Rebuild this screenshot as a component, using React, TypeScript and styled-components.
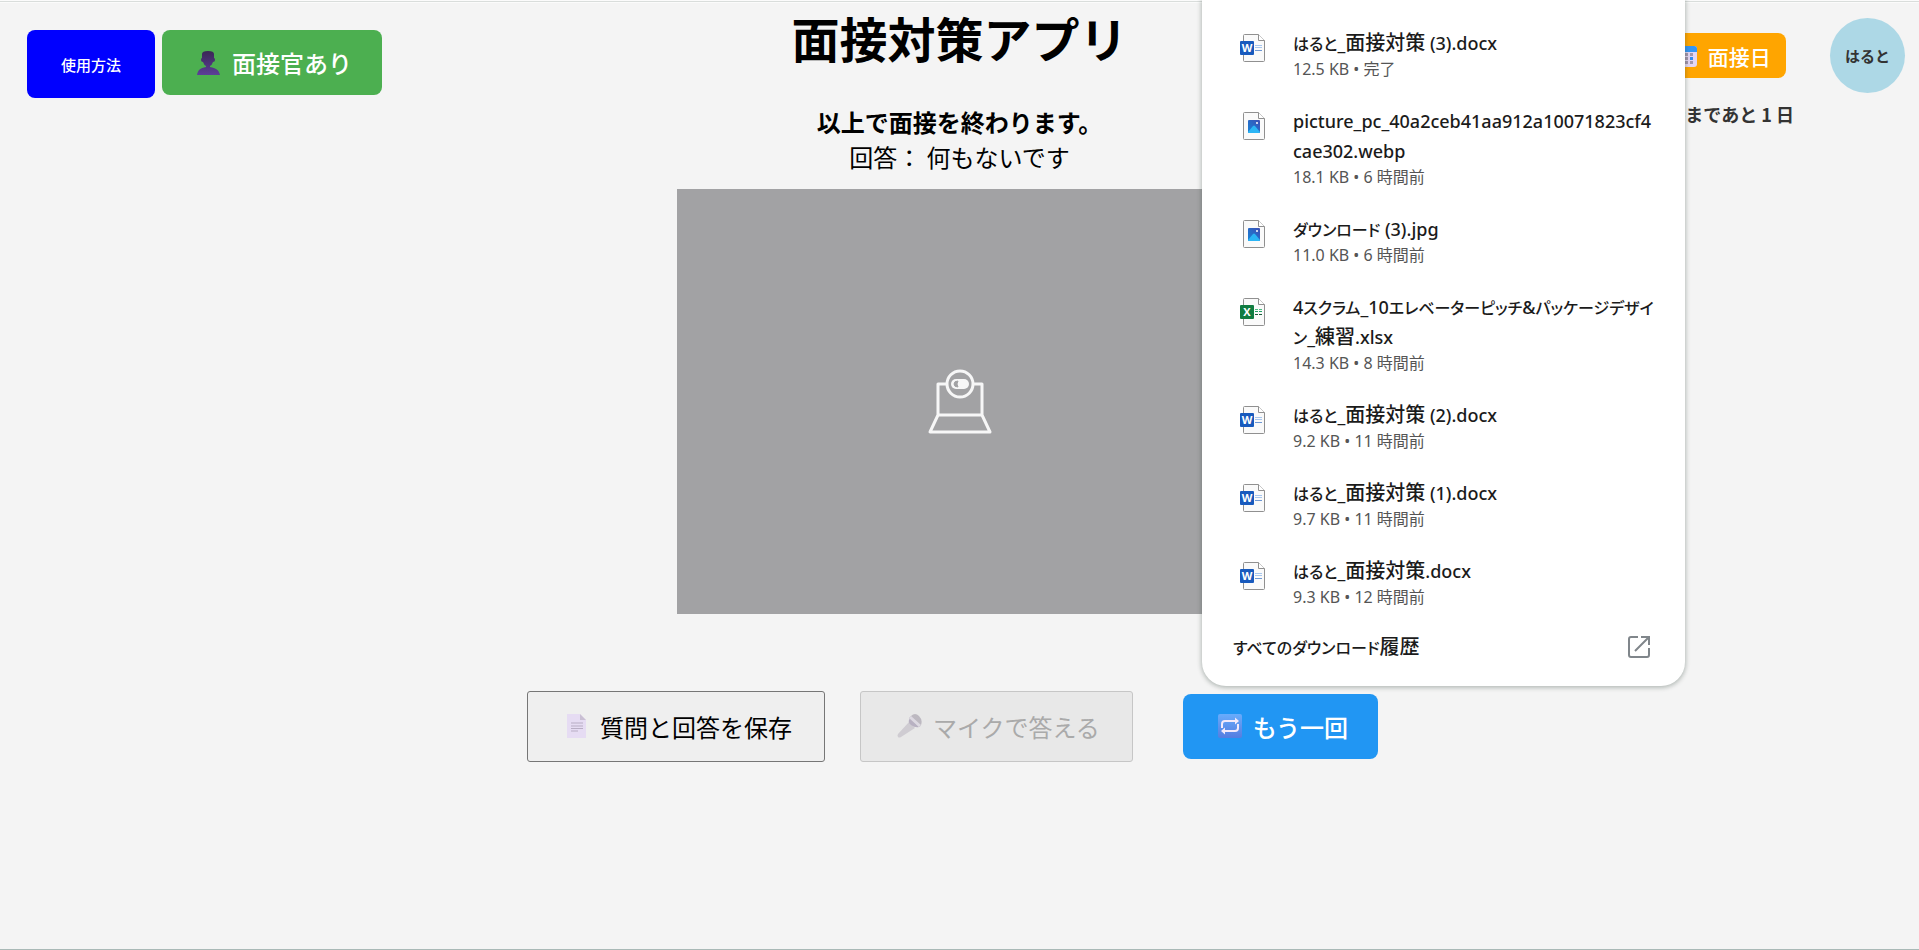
import React from "react";
import styled, { createGlobalStyle } from "styled-components";

const GlobalStyle = createGlobalStyle`
  *, *::before, *::after { box-sizing: border-box; }
  body {
    margin: 0;
    background: #f4f4f4;
    color: #000;
    font-family: "Noto Sans CJK JP", sans-serif;
  }
  button { font-family: inherit; cursor: pointer; }
  h1, p, ul { margin: 0; padding: 0; }
`;

const Page = styled.div`
  position: relative;
  min-height: 100vh;
  border-bottom: 1px solid #a9b9b6;
`;

const TopEdge = styled.div`
  height: 3px;
  border: solid #fbfbfb;
  border-width: 1px 0;
  background: #d9dddb;
`;

const Stage = styled.main`
  display: grid;
  grid-template-columns: minmax(0, 1fr) auto minmax(0, 1fr);
  align-items: start;
`;

const LeftTools = styled.div`
  display: flex;
  align-items: flex-start;
  gap: 7px;
  padding: 27px 0 0 27px;
`;

const RightTools = styled.div`
  display: flex;
  justify-content: flex-end;
  align-items: flex-start;
  gap: 44px;
  padding: 15px 14px 0 0;
`;

const FilledButton = styled.button<{ $color: string }>`
  display: inline-flex;
  align-items: center;
  justify-content: center;
  gap: 7px;
  height: 65px;
  padding: 0 30px;
  border: 0;
  border-radius: 8px;
  background: ${(p) => p.$color};
  color: #fff;
  font-size: 24px;
  font-weight: 500;
  white-space: nowrap;
`;

const HelpButton = styled(FilledButton)`
  width: 128px;
  height: 68px;
  padding: 0;
  font-size: 15px;
`;

const DateButton = styled(FilledButton)`
  height: 45px;
  padding: 0 15px;
  font-size: 21px;
`;

const DateBlock = styled.div`
  display: flex;
  flex-direction: column;
  align-items: center;
  gap: 23px;
  padding-top: 15px;
`;

const Countdown = styled.p`
  margin: 0 -8px;
  color: #333;
  font-size: 18px;
  line-height: 26px;
  font-weight: 700;
  white-space: nowrap;
`;

const Avatar = styled.button`
  width: 75px;
  height: 75px;
  flex: none;
  padding: 0;
  border: 0;
  border-radius: 50%;
  background: #add8e6;
  color: #333;
  font-size: 15px;
  font-weight: 700;
`;

const Center = styled.div`
  display: flex;
  flex-direction: column;
  align-items: center;
`;

const Title = styled.h1`
  font-size: 48px;
  line-height: 68px;
  font-weight: 700;
`;

const Dialogue = styled.div`
  padding: 33px 0 15px;
  font-size: 24px;
  line-height: 35px;
  text-align: center;
`;

const Question = styled.p`
  font-weight: 700;
`;

const Video = styled.div`
  display: flex;
  align-items: center;
  justify-content: center;
  width: 566px;
  aspect-ratio: 4 / 3;
  background: #a2a2a4;
`;

const Actions = styled.div`
  display: flex;
  justify-content: center;
  align-items: center;
  gap: 35px;
  padding: 77px 14px 0 0;
`;

const PlainButton = styled.button`
  display: inline-flex;
  align-items: center;
  gap: 7px;
  height: 71px;
  padding: 0 32px;
  border: 1px solid #767676;
  border-radius: 3px;
  background: #efefef;
  color: #000;
  font-size: 24px;
  white-space: nowrap;
  &:disabled {
    border-color: #c6c6c6;
    background: #e8e8e8;
    color: #aaa;
    cursor: default;
  }
`;

const RetryButton = styled(FilledButton)`
  margin-left: 15px;
`;

const Downloads = styled.aside`
  position: absolute;
  top: 0;
  right: 234px;
  width: 483px;
  padding: 14px 0 12px;
  border-radius: 0 0 24px 24px;
  background: #fff;
  box-shadow: 0 1px 4px 1px rgba(40, 60, 50, 0.3);
  color: #1b1b1b;
  font-family: "Noto Sans", "Noto Sans CJK JP", sans-serif;
  font-feature-settings: "palt";
`;

const FileList = styled.ul`
  list-style: none;
`;

const FileRow = styled.li`
  display: grid;
  grid-template-columns: 26px minmax(0, 1fr);
  column-gap: 27px;
  padding: 14px 20px 12px 38px;
`;

const FileIconBox = styled.span`
  display: block;
  height: 28px;
  margin-top: 6px;
`;

const FileName = styled.p`
  font-size: 18px;
  line-height: 30px;
  font-weight: 500;
  white-space: pre-line;
`;

const Kana = styled.span`
  font-size: 16px;
  line-height: 1;
`;

const Kanji = styled.span`
  font-size: 20px;
  line-height: 1;
`;

const FileMeta = styled.p`
  color: #555;
  font-size: 16px;
  line-height: 22px;
`;

const HistoryLink = styled.a`
  display: flex;
  align-items: center;
  justify-content: space-between;
  height: 54px;
  padding: 0 34px 0 31px;
  color: inherit;
  font-size: 18px;
  font-weight: 500;
  text-decoration: none;
`;

const PersonIcon = () => (
  <svg width="33" height="24" viewBox="0 0 33 24" aria-hidden="true">
    <defs>
      <linearGradient id="person" x1="0" y1="0" x2="0" y2="1">
        <stop offset="0" stopColor="#3a2755" />
        <stop offset="1" stopColor="#5c3f98" />
      </linearGradient>
    </defs>
    <path d="M10 3q0-3 6-3t6 3v4q1 0 1 2t-2 2q-1 3-3 4v1c6 1 9 3 10 8H5c1-5 3-7 9-8v-1q-2-1-3-4-2 0-2-2t1-2z" fill="url(#person)" />
  </svg>
);

const CalendarIcon = () => (
  <svg width="28" height="22" viewBox="0 0 28 22" aria-hidden="true">
    <rect x="4" y="1" width="20" height="21" rx="3" fill="#e3d6f3" />
    <path d="M4 7V4q0-3 3-3h14q3 0 3 3v3z" fill="#3596f3" />
    {[8, 12, 16].map((y) =>
      [8, 12, 17].map((x) => (
        <rect key={`${x}-${y}`} x={x} y={y} width="3" height="3" fill={x === 17 && y === 12 ? "#2f8df0" : "#a397ad"} />
      ))
    )}
  </svg>
);

const PageIcon = () => (
  <svg width="33" height="24" viewBox="0 0 33 24" aria-hidden="true">
    <path d="M7 0h13l6 6v18H7z" fill="#e6dcf3" />
    <path d="M20 0l6 6h-6z" fill="#c9bfd3" />
    <path d="M11 9h12M11 12h12M11 14.500h12M11 17h7" stroke="#b8adc4" strokeWidth="1" />
  </svg>
);

const MicIcon = () => (
  <svg width="33" height="24" viewBox="0 0 33 24" aria-hidden="true">
    <path d="M16 8l6 6L8 23q-2 1-3 0t0-3z" fill="#cfccd2" />
    <path d="M17 4l9 9q-4 1-8-2t-1-7z" fill="#b8b1c2" />
    <path d="M18 2q4-4 8 0t2 9q-1 2-2 2L16 4z" fill="#bdb9c1" />
    <path d="M16 4l2-2 10 9-2 2z" fill="#ddd9e2" />
  </svg>
);

const RepeatIcon = () => (
  <svg width="33" height="24" viewBox="0 0 33 24" aria-hidden="true">
    <defs>
      <linearGradient id="repeat" x1="0" y1="0" x2="0" y2="1">
        <stop offset="0" stopColor="#68acfc" />
        <stop offset="1" stopColor="#557de0" />
      </linearGradient>
    </defs>
    <rect x="5" y="0" width="24" height="24" rx="2" fill="url(#repeat)" />
    <path d="M9 14v-4q0-3 3-3h11M25 10v4q0 3-3 3H11" fill="none" stroke="#f3eafa" strokeWidth="2" />
    <path d="M22 3.500l4 3.500-4 3.500zM12 13.500l-4 3.500 4 3.500z" fill="#f3eafa" />
  </svg>
);

const WebcamIcon = () => (
  <svg width="66" height="66" viewBox="0 0 66 66" fill="none" stroke="#f7f7f7" strokeWidth="3" strokeLinejoin="round" aria-hidden="true">
    <circle cx="33" cy="16" r="13" />
    <path d="M20 16h-9v31h44V16h-9M11 47L3 64h60l-8-17" />
    <rect x="24" y="11" width="18" height="10" rx="5" fill="#f7f7f7" stroke="none" />
    <path d="M31 13q-4 0-4 3t4 3q-2-3 0-6z" fill="#a2a2a4" stroke="#a2a2a4" strokeWidth="1" />
  </svg>
);

type Kind = "word" | "excel" | "image";

const Badge = ({ color, letter }: { color: string; letter: string }) => (
  <>
    <rect x="0" y="7" width="14" height="14" rx="1" fill={color} />
    <text x="7" y="18" textAnchor="middle" fontFamily="Open Sans, sans-serif" fontWeight="700" fontSize="11" fill="#fff">
      {letter}
    </text>
  </>
);

const FileIcon = ({ kind }: { kind: Kind }) => (
  <svg width="26" height="28" viewBox="0 0 26 28" aria-hidden="true">
    <defs>
      <linearGradient id="photo" x1="0" y1="1" x2="1" y2="0">
        <stop offset="0" stopColor="#1583d8" />
        <stop offset="1" stopColor="#3e4fb4" />
      </linearGradient>
    </defs>
    <path d="M3.500 1.500q0-1 1-1H18.500l6 6v20q0 1-1 1h-19q-1 0-1-1z" fill="#fafafa" stroke="#909090" />
    <path d="M18.500.500v6h6" fill="#fff" stroke="#909090" />
    {kind === "word" && (
      <>
        <path d="M15 11.500h7M15 13.500h7" stroke="#a8c7ee" />
        <path d="M15 16.500h7" stroke="#6f98d4" />
        <Badge color="#185abd" letter="W" />
      </>
    )}
    {kind === "excel" && (
      <>
        <path d="M15 11.500h3M19 11.500h3" stroke="#4fbd82" />
        <path d="M15 13.500h3M19 13.500h3" stroke="#21a366" />
        <path d="M15 16.500h3M19 16.500h3" stroke="#185c37" />
        <Badge color="#107c41" letter="X" />
      </>
    )}
    {kind === "image" && (
      <>
        <rect x="8" y="8" width="12" height="13" rx="1" fill="url(#photo)" />
        <path d="M8 20l5-6q1-1 2 0l5 6q0 1-1 1H9q-1 0-1-1z" fill="#2bb5f5" />
        <circle cx="17" cy="11" r="1" fill="#fff" />
      </>
    )}
  </svg>
);

const OpenIcon = () => (
  <svg width="24" height="24" viewBox="0 0 24 24" fill="none" stroke="#80868b" strokeWidth="2" aria-hidden="true">
    <path d="M11 2H4q-2 0-2 2v16q0 2 2 2h16q2 0 2-2v-7M14 2h8v8M22 2L8 16" />
  </svg>
);

/* Sets kana a little smaller and kanji a little larger than the Latin text. */
const MixedText = ({ text }: { text: string }) => (
  <>
    {text.split(/([\u3040-\u30ff]+|[\u4e00-\u9fff]+)/).map((run, i) => {
      if (/^[\u3040-\u30ff]/.test(run)) return <Kana key={i}>{run}</Kana>;
      if (/^[\u4e00-\u9fff]/.test(run)) return <Kanji key={i}>{run}</Kanji>;
      return run;
    })}
  </>
);

const files: { kind: Kind; name: string; meta: string }[] = [
  { kind: "word", name: "はると_面接対策 (3).docx", meta: "12.5 KB • 完了" },
  { kind: "image", name: "picture_pc_40a2ceb41aa912a10071823cf4\ncae302.webp", meta: "18.1 KB • 6 時間前" },
  { kind: "image", name: "ダウンロード (3).jpg", meta: "11.0 KB • 6 時間前" },
  { kind: "excel", name: "4スクラム_10エレベーターピッチ&パッケージデザイ\nン_練習.xlsx", meta: "14.3 KB • 8 時間前" },
  { kind: "word", name: "はると_面接対策 (2).docx", meta: "9.2 KB • 11 時間前" },
  { kind: "word", name: "はると_面接対策 (1).docx", meta: "9.7 KB • 11 時間前" },
  { kind: "word", name: "はると_面接対策.docx", meta: "9.3 KB • 12 時間前" },
];

export default function App() {
  return (
    <Page lang="ja">
      <GlobalStyle />
      <TopEdge />
      <Stage>
        <LeftTools>
          <HelpButton $color="#0000ff">使用方法</HelpButton>
          <FilledButton $color="#4caf50">
            <PersonIcon />
            面接官あり
          </FilledButton>
        </LeftTools>
        <Center>
          <Title>面接対策アプリ</Title>
          <Dialogue>
            <Question>以上で面接を終わります。</Question>
            <p>回答： 何もないです</p>
          </Dialogue>
          <Video>
            <WebcamIcon />
          </Video>
        </Center>
        <RightTools>
          <DateBlock>
            <DateButton $color="#ffa500">
              <CalendarIcon />
              面接日
            </DateButton>
            <Countdown>面接まであと 1 日</Countdown>
          </DateBlock>
          <Avatar>はると</Avatar>
        </RightTools>
      </Stage>
      <Actions>
        <PlainButton>
          <PageIcon />
          質問と回答を保存
        </PlainButton>
        <PlainButton disabled>
          <MicIcon />
          マイクで答える
        </PlainButton>
        <RetryButton $color="#2196f3">
          <RepeatIcon />
          もう一回
        </RetryButton>
      </Actions>
      <Downloads>
        <FileList>
          {files.map((file) => (
            <FileRow key={file.name}>
              <FileIconBox>
                <FileIcon kind={file.kind} />
              </FileIconBox>
              <div>
                <FileName>
                  <MixedText text={file.name} />
                </FileName>
                <FileMeta>{file.meta}</FileMeta>
              </div>
            </FileRow>
          ))}
        </FileList>
        <HistoryLink href="#downloads">
          <span>
            <MixedText text="すべてのダウンロード履歴" />
          </span>
          <OpenIcon />
        </HistoryLink>
      </Downloads>
    </Page>
  );
}
